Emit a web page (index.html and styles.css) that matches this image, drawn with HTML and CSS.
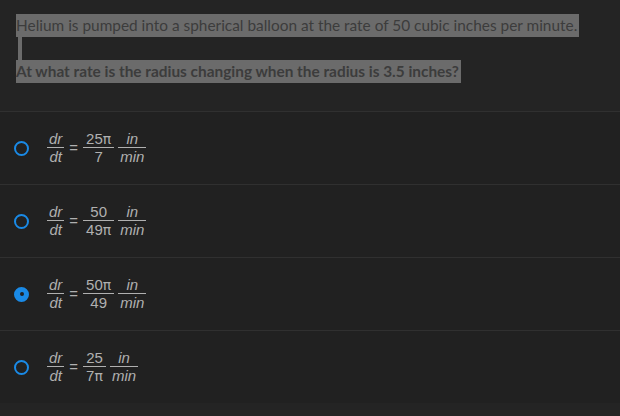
FILE: index.html
```html
<!DOCTYPE html>
<html>
<head>
<meta charset="utf-8">
<link rel="stylesheet" href="styles.css">
</head>
<body>
<div class="question">
  <div class="line"><span class="hl">Helium is pumped into a spherical balloon at the rate of 50 cubic inches per minute.</span></div>
  <div class="line"><span class="hl blank"></span></div>
  <div class="line bold"><span class="hl">At what rate is the radius changing when the radius is 3.5 inches?</span></div>
</div>
<div class="options">
  <div class="option">
    <span class="radio"></span>
    <span class="math">
      <span class="frac it"><span class="num">dr</span><span class="den">dt</span></span>
      <span class="eq">=</span>
      <span class="frac wide"><span class="num">25<span class="pi">π</span></span><span class="den">7</span></span>
      <span class="frac it"><span class="num">in</span><span class="den">min</span></span>
    </span>
  </div>
  <div class="option">
    <span class="radio"></span>
    <span class="math">
      <span class="frac it"><span class="num">dr</span><span class="den">dt</span></span>
      <span class="eq">=</span>
      <span class="frac wide"><span class="num">50</span><span class="den">49<span class="pi">π</span></span></span>
      <span class="frac it"><span class="num">in</span><span class="den">min</span></span>
    </span>
  </div>
  <div class="option">
    <span class="radio checked"></span>
    <span class="math">
      <span class="frac it"><span class="num">dr</span><span class="den">dt</span></span>
      <span class="eq">=</span>
      <span class="frac wide"><span class="num">50<span class="pi">π</span></span><span class="den">49</span></span>
      <span class="frac it"><span class="num">in</span><span class="den">min</span></span>
    </span>
  </div>
  <div class="option">
    <span class="radio"></span>
    <span class="math">
      <span class="frac it"><span class="num">dr</span><span class="den">dt</span></span>
      <span class="eq">=</span>
      <span class="frac wide"><span class="num">25</span><span class="den">7<span class="pi">π</span></span></span>
      <span class="frac it"><span class="num">in</span><span class="den">min</span></span>
    </span>
  </div>
</div>
</body>
</html>
```
FILE: styles.css
```css
html, body {
  margin: 0;
  padding: 0;
  background: #242424;
  width: 620px;
  height: 416px;
  overflow: hidden;
}
.question {
  padding: 14px 0 28px 16px;
  font-family: "Lato", "Liberation Sans", sans-serif;
  font-size: 15.4px;
  color: #3c3c3c;
}
.line {
  height: 23px;
  line-height: 23px;
}
.hl {
  display: inline-block;
  background: #6b6b6b;
  height: 23px;
  padding-right: 2px;
}
.hl.blank {
  width: 4px;
  padding: 0;
  margin-left: 2px;
}
.bold {
  font-weight: 700;
}
.options {
  background: #212121;
}
.option {
  display: flex;
  align-items: center;
  height: 72px;
  border-top: 1px solid #303030;
  padding-left: 14px;
}
.radio {
  width: 11px;
  height: 11px;
  border: 2px solid #1a8ae6;
  border-radius: 50%;
  box-sizing: content-box;
  margin-right: 18px;
  flex: none;
}
.radio.checked {
  background: #1a8ae6;
  position: relative;
}
.radio.checked::after {
  content: "";
  position: absolute;
  left: 3.5px;
  top: 3.5px;
  width: 4px;
  height: 4px;
  border-radius: 50%;
  background: #222;
}
.math {
  display: flex;
  align-items: center;
  font-family: "Liberation Sans", Arial, sans-serif;
  font-size: 15px;
  color: #b0b0b0;
}
.frac {
  display: inline-flex;
  flex-direction: column;
  align-items: stretch;
  text-align: center;
  margin-right: 4px;
}
.frac .num {
  line-height: 16px;
  padding: 0 2px;
  border-bottom: 1px solid #b0b0b0;
}
.frac .den {
  line-height: 16px;
  padding: 1px 2px 0;
}
.frac.wide .num,
.frac.wide .den {
  padding-left: 3px;
  padding-right: 3px;
}
.it {
  font-style: italic;
}
.eq {
  margin: 0 5px 0 1px;
  line-height: 14px;
}
.pi {
  font-family: "DejaVu Sans", sans-serif;
  font-size: 14px;
}
```
